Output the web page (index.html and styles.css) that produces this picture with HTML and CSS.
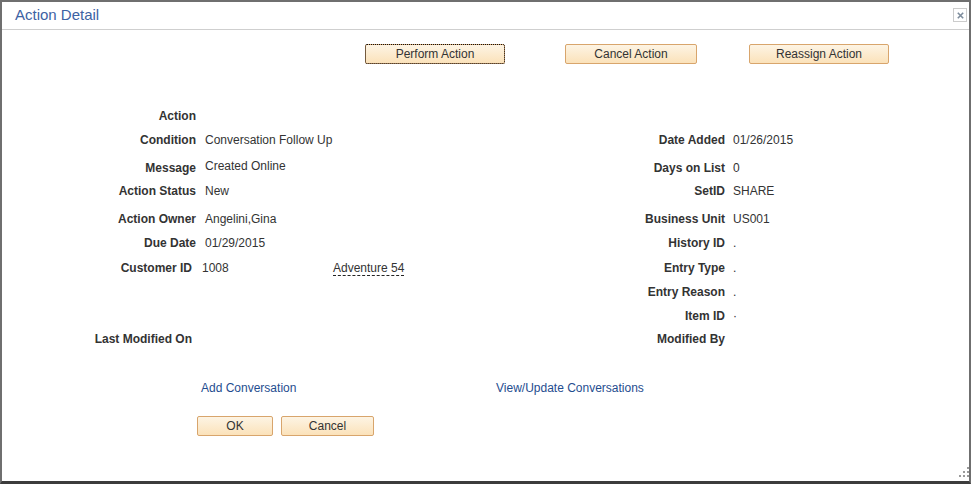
FILE: index.html
```html
<!DOCTYPE html>
<html lang="en">
<head>
<meta charset="utf-8">
<title>Action Detail</title>
<link rel="stylesheet" href="styles.css">
</head>
<body>
<div class="dialog">
  <div class="header">
    <span class="title">Action Detail</span>
    <button class="close" aria-label="Close">
      <svg width="7" height="7" viewBox="0 0 7 7"><path d="M0.8 0.8 L6.2 6.2 M6.2 0.8 L0.8 6.2" stroke="#7d8c9c" stroke-width="1.6"/></svg>
    </button>
  </div>
  <div class="content">
    <div class="actions">
      <button class="btn btn-perform focus">Perform Action</button>
      <button class="btn btn-cancel-action">Cancel Action</button>
      <button class="btn btn-reassign">Reassign Action</button>
    </div>
    <div class="fields">
      <div class="lbl r1">Action</div>

      <div class="lbl r2">Condition</div>
      <div class="val r2">Conversation Follow Up</div>
      <div class="lbl2 r2">Date Added</div>
      <div class="val2 r2">01/26/2015</div>

      <div class="lbl r3 low">Message</div>
      <div class="val r3">Created Online</div>
      <div class="lbl2 r3 low">Days on List</div>
      <div class="val2 r3 low">0</div>

      <div class="lbl r4">Action Status</div>
      <div class="val r4">New</div>
      <div class="lbl2 r4">SetID</div>
      <div class="val2 r4">SHARE</div>

      <div class="lbl r5">Action Owner</div>
      <div class="val r5">Angelini,Gina</div>
      <div class="lbl2 r5">Business Unit</div>
      <div class="val2 r5">US001</div>

      <div class="lbl r6">Due Date</div>
      <div class="val r6">01/29/2015</div>
      <div class="lbl2 r6">History ID</div>
      <div class="val2 r6">.</div>

      <div class="lbl r7 shift">Customer ID</div>
      <div class="val r7 shift-val">1008</div>
      <div class="extra r7"><span class="dotted">Adventure 54</span></div>
      <div class="lbl2 r7">Entry Type</div>
      <div class="val2 r7">.</div>

      <div class="lbl2 r8">Entry Reason</div>
      <div class="val2 r8">.</div>

      <div class="lbl2 r9">Item ID</div>
      <div class="val2 r9">·</div>

      <div class="lbl r10 shift">Last Modified On</div>
      <div class="lbl2 r10">Modified By</div>
    </div>
    <div class="links">
      <a class="link link-add" href="#">Add Conversation</a>
      <a class="link" href="#">View/Update Conversations</a>
    </div>
    <div class="footer">
      <button class="btn btn-ok">OK</button>
      <button class="btn btn-cancel">Cancel</button>
    </div>
  </div>
  <div class="grip">
    <span class="dot d1"></span>
    <span class="dot d2"></span><span class="dot d3"></span>
    <span class="dot d4"></span><span class="dot d5"></span><span class="dot d6"></span>
  </div>
</div>
</body>
</html>
```
FILE: styles.css
```css
html, body {
  margin: 0;
  padding: 0;
  background: #ffffff;
}
body {
  width: 971px;
  height: 484px;
  overflow: hidden;
  font-family: "Liberation Sans", Arial, sans-serif;
  font-size: 12px;
  color: #333333;
}
.dialog {
  position: relative;
  box-sizing: border-box;
  width: 971px;
  height: 484px;
  border: 2px solid #6f6f6f;
  border-bottom: 3px solid #3c3c3c;
  background: #ffffff;
}
.header {
  display: flex;
  align-items: center;
  justify-content: space-between;
  height: 27px;
  border-bottom: 1px solid #cfcfcf;
  padding-left: 13px;
  padding-right: 2px;
}
.title {
  font-size: 15px;
  color: #3d62a3;
  line-height: 18px;
  margin-top: -1px;
}
.close {
  box-sizing: border-box;
  width: 14px;
  height: 14px;
  padding: 0;
  border: 1px solid #cccccc;
  background: #ffffff;
  display: flex;
  align-items: center;
  justify-content: center;
  margin-top: -1px;
}
.content {
  display: flex;
  flex-direction: column;
}
.btn {
  box-sizing: border-box;
  height: 20px;
  padding: 0;
  border: 1px solid #d8a56c;
  border-radius: 2px;
  background: linear-gradient(#fdf4e4, #fbe2ba);
  font-family: "Liberation Sans", Arial, sans-serif;
  font-size: 12px;
  color: #333333;
  line-height: 18px;
  text-align: center;
}
.focus {
  outline: 1px dotted #111111;
  outline-offset: -1px;
}
.actions {
  display: flex;
  margin-top: 14px;
  padding-left: 363px;
}
.btn-perform { width: 140px; }
.btn-cancel-action { width: 132px; margin-left: 60px; }
.btn-reassign { width: 140px; margin-left: 52px; }

.fields {
  display: grid;
  grid-template-columns: 194px 137px 160px 232px 1fr;
  grid-template-rows: 24px 26px 25px 28px 24px 25px 24px 24px 23px 16px;
  margin-top: 44px;
  line-height: 16px;
}
.fields > div { align-self: start; white-space: nowrap; }
.lbl { grid-column: 1; justify-self: end; font-weight: bold; }
.val { grid-column: 2; padding-left: 9px; }
.extra { grid-column: 3; }
.lbl2 { grid-column: 4; justify-self: end; font-weight: bold; }
.val2 { grid-column: 5; padding-left: 8px; }
.r1 { grid-row: 1; }
.r2 { grid-row: 2; }
.r3 { grid-row: 3; }
.r4 { grid-row: 4; }
.r5 { grid-row: 5; }
.r6 { grid-row: 6; }
.r7 { grid-row: 7; }
.r8 { grid-row: 8; }
.r9 { grid-row: 9; }
.r10 { grid-row: 10; }
.low { margin-top: 2px; }
.shift { margin-right: 4px; }
.shift-val { margin-left: -3px; }
.dotted {
  display: inline-block;
  line-height: 14px;
  border-bottom: 1px dashed #222222;
}

.links {
  display: flex;
  margin-top: 33px;
  padding-left: 199px;
  line-height: 16px;
}
.link {
  color: #1f4d8f;
  text-decoration: none;
  white-space: nowrap;
}
.link-add { width: 295px; }

.footer {
  display: flex;
  gap: 8px;
  margin-top: 20px;
  padding-left: 195px;
}
.btn-ok { width: 76px; }
.btn-cancel { width: 93px; }

.grip {
  position: absolute;
  right: 0;
  bottom: 2px;
  width: 12px;
  height: 12px;
}
.dot {
  position: absolute;
  width: 2px;
  height: 2px;
  background: #9a9a9a;
}
.d1 { right: 0; top: 0; }
.d2 { right: 4px; top: 4px; }
.d3 { right: 0; top: 4px; }
.d4 { right: 8px; top: 8px; }
.d5 { right: 4px; top: 8px; }
.d6 { right: 0; top: 8px; }
```
